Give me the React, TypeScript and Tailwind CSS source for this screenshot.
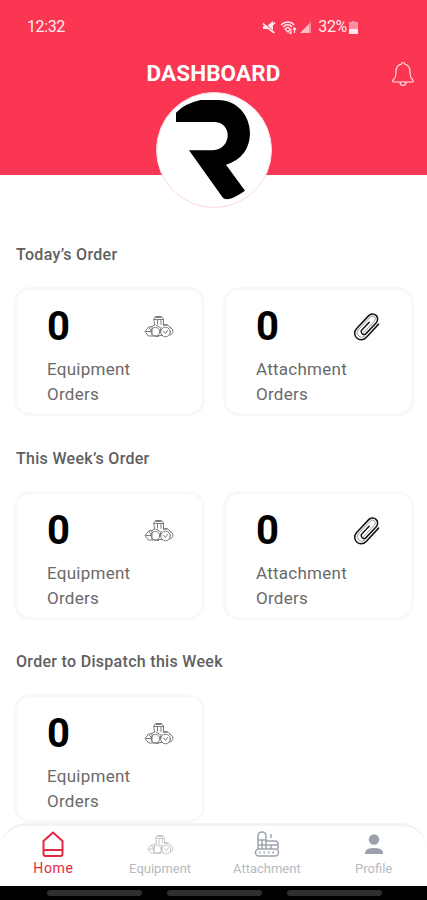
import type { ReactNode } from 'react';

interface OrderCardProps {
  label: string;
  icon: ReactNode;
}

interface Section {
  title: string;
  attachments: boolean;
}

const sections: Section[] = [
  { title: 'Today’s Order', attachments: true },
  { title: 'This Week’s Order', attachments: true },
  { title: 'Order to Dispatch this Week', attachments: false },
];

function TractorIcon({ className }: { className?: string }) {
  return (
    <svg viewBox="0 0 30 24" fill="none" stroke="currentColor" strokeWidth="0.900" strokeLinecap="round" strokeLinejoin="round" className={className}>
      <path d="M10.500 10 9.800 4l1.700-2.500h6L19.500 4v5.500M12 2.500h5M13.500 9V5M17 5v4.500M10 4.500h9" />
      <path d="M10.500 10 8 11.500 4.500 12l-3.500 4.500 3.500 4.500h5l5 .5M5 12.500l2 3M2 16.500h5M8 12v8M12 10l4 2.500" />
      <path d="m19.500 9 4 1 3 2.500M19.500 10.500l4-.5" />
      <circle cx="11.500" cy="16.700" r="4.300" />
      <circle cx="21.500" cy="17" r="4.800" />
      <path d="m19.500 16 2 2.500 2-3M26 12.500c4 1 4 6.500 0 7.500M14.500 20.500h4M17 12.500l-1 4.500" />
    </svg>
  );
}

function ClipIcon() {
  return (
    <svg viewBox="-14 -15 28 30" fill="none" strokeLinecap="round" className="mr-[2px] h-[30px] w-7">
      <g transform="rotate(43)">
        <path d="M6.500-10V8.500a6.500 6.500 0 0 1-13 0V-9.500a5 5 0 0 1 10.300 0V6.500a3 3 0 0 1-5.500 0V-5" stroke="#111" strokeWidth="1.500" />
        <path d="M4.800 8.500a4.700 4.700 0 0 1-9.200 0V-9.500a2.900 2.900 0 0 1 5.800 0V6.500" stroke="#777" strokeWidth="0.700" />
      </g>
    </svg>
  );
}

function OrderCard({ label, icon }: OrderCardProps) {
  return (
    <div className="flex h-[129px] flex-col rounded-2xl border-[3px] border-[#f8f8f8] bg-white pl-[30px] pr-[28px]">
      <div className="mt-[13px] flex h-12 items-center justify-between">
        <span className="text-[40px] leading-[48px] font-bold text-black">0</span>
        {icon}
      </div>
      <p className="mt-[6px] w-[100px] text-[17px] leading-[25px] tracking-[0.25px] text-[#6a6a6a]">{label}</p>
    </div>
  );
}

function StatusBar() {
  return (
    <div className="flex h-[54px] items-center justify-between pl-[27px] pr-[69px] text-[16px] text-[#ffe9ed]">
      <span className="tracking-[-0.4px]">12:32</span>
      <div className="flex items-center">
        <svg viewBox="0 0 14 14" className="h-[14px] w-[14px]" fill="currentColor">
          <path d="M1 6h4l6-5v12l-5-4H1z" />
          <path d="m0 1 13 12" stroke="#fa3653" strokeWidth="1.200" />
          <path d="m1 3.500 11.500 9.500M9 6l4-3.500" stroke="currentColor" strokeWidth="1.600" />
        </svg>
        <svg viewBox="0 0 17 15" className="ml-1 h-[15px] w-[17px]" fill="none" stroke="currentColor" strokeWidth="1.300">
          <path d="M1 5c4-4 10-4 13 0M3 7c3-3 6.500-3 9 0M5 9c2-2 3.500-2 5 0L8 12z" />
          <path d="M11 9v5m-1.500-1.500L11 14M14.500 13V8m-1.500 1.500L14.500 8 16 9.500" />
        </svg>
        <svg viewBox="0 0 12 12" className="ml-[3px] h-3 w-3" fill="currentColor">
          <path d="M0 12 9 3v9z" opacity=".75" />
          <path d="M9 12h2V0L9 3z" opacity=".45" />
        </svg>
        <span className="ml-[6px] tracking-[-0.3px]">32%</span>
        <svg viewBox="0 0 9 13" className="ml-[2px] h-[13px] w-[9px]" fill="currentColor">
          <path d="M3 0h3v1h3v7H0V1h3z" opacity=".5" />
          <path d="M0 8h9v5H0z" />
        </svg>
      </div>
    </div>
  );
}

function Header() {
  return (
    <header className="relative h-[175px] shrink-0 bg-[#fa3653]">
      <StatusBar />
      <div className="grid h-[39px] grid-cols-[1fr_auto_1fr] items-center">
        <h1 className="col-start-2 text-[22.500px] font-bold tracking-[0.1px] text-white">DASHBOARD</h1>
        <svg viewBox="0 0 24 28" className="mr-3 h-7 w-6 justify-self-end" fill="none" stroke="#ffe4e9" strokeWidth="1.200" strokeLinecap="round" strokeLinejoin="round">
          <path d="M10.500 4a1.500 1.500 0 1 1 3 0c4 1 5.500 4 5.500 7.500 0 5 .5 6.500 3 8.500.5.500.5 2-.5 2h-19c-1 0-1-1.500-.5-2 2.500-2 3-3.500 3-8.500C5 8 6.500 5 10.500 4zM9 22.500c.5 4 5.500 4 6 0" />
        </svg>
      </div>
      {/* Logo badge */}
      <div className="absolute top-[92px] left-[156px] size-[116px] rounded-full border border-[#fdd9df] bg-white">
        <svg viewBox="51 38 342 342" className="size-[114px]">
          <path d="M108 97Q132 70 182 59H235C290 59 330 104 330 160Q328 230 258 253L315 331Q284 353 262 357Q251 357 247 350L147 210H219C278 205 276 127 225 125H108z" />
        </svg>
      </div>
    </header>
  );
}

function BottomNav() {
  return (
    <nav className="grid h-[63px] shrink-0 grid-cols-4 rounded-t-[26px] border-t-[3px] border-[#f3f3f3] bg-white text-[13px] leading-4 text-[#b7babf]">
      <div className="flex flex-col items-center pt-[5px] text-[#e32943]">
        <svg viewBox="0 0 24 26" className="h-[26px] w-6" fill="none" stroke="currentColor" strokeWidth="2" strokeLinejoin="round">
          <path d="M2.500 10 12 1.500 21.500 10v13q0 2-2 2h-15q-2 0-2-2zM3 19h18" />
        </svg>
        <span className="mt-[3px] text-[14px] tracking-[0.6px]">Home</span>
      </div>
      <div className="flex flex-col items-center pt-[8px]">
        <TractorIcon className="h-[22px] w-[27px]" />
        <span className="mt-[5px]">Equipment</span>
      </div>
      <div className="flex flex-col items-center pt-[5px]">
        <svg viewBox="0 0 26 26" className="h-[26px] w-[26px]" fill="none" stroke="#9da4ae" strokeWidth="1.500" strokeLinejoin="round">
          <path d="M4 18V5q0-4 4-4t4 4v13M4 9h8M8 9v9M12 10h9q3 0 3 3v5M4 14h20M17 14v4M17 7V3" />
          <rect x="1.500" y="18" width="23" height="7" rx="3.500" />
          <path d="M5 21.500h1.500m3 0H11m3 0h1.500m3 0H20" strokeWidth="2" />
        </svg>
        <span className="mt-[4px]">Attachment</span>
      </div>
      <div className="flex flex-col items-center pt-[8px]">
        <svg viewBox="0 0 20 20" className="size-5" fill="#9aa1aa">
          <circle cx="10" cy="5.500" r="5.200" />
          <path d="M1 20v-1q0-5 9-5t9 5v1z" />
        </svg>
        <span className="mt-[7px]">Profile</span>
      </div>
    </nav>
  );
}

export default function App() {
  return (
    <div className="flex h-[900px] w-[427px] flex-col overflow-hidden bg-white font-['Roboto',sans-serif]">
      <Header />
      <main className="min-h-0 flex-1 overflow-hidden pt-[70px]">
        {sections.map(section => (
          <section key={section.title} className="h-[203.500px] px-[14px]">
            <h2 className="pl-[2px] text-[16px] leading-5 font-medium tracking-[0.3px] text-[#606060]">{section.title}</h2>
            <div className="mt-[22px] grid grid-cols-[191px_191px] gap-[18px]">
              <OrderCard label="Equipment Orders" icon={<TractorIcon className="h-6 w-[30px] text-[#6d6d6d]" />} />
              {section.attachments && <OrderCard label="Attachment Orders" icon={<ClipIcon />} />}
            </div>
          </section>
        ))}
      </main>
      <BottomNav />
      {/* Phone navigation strip */}
      <div className="flex h-[14px] shrink-0 gap-[25px] bg-black pt-1 pl-[47px]">
        <div className="h-[6px] w-[95px] rounded-sm bg-[#2e2e2e]" />
        <div className="h-[6px] w-[95px] rounded-sm bg-[#2e2e2e]" />
        <div className="h-[6px] w-[95px] rounded-sm bg-[#2e2e2e]" />
      </div>
    </div>
  );
}
